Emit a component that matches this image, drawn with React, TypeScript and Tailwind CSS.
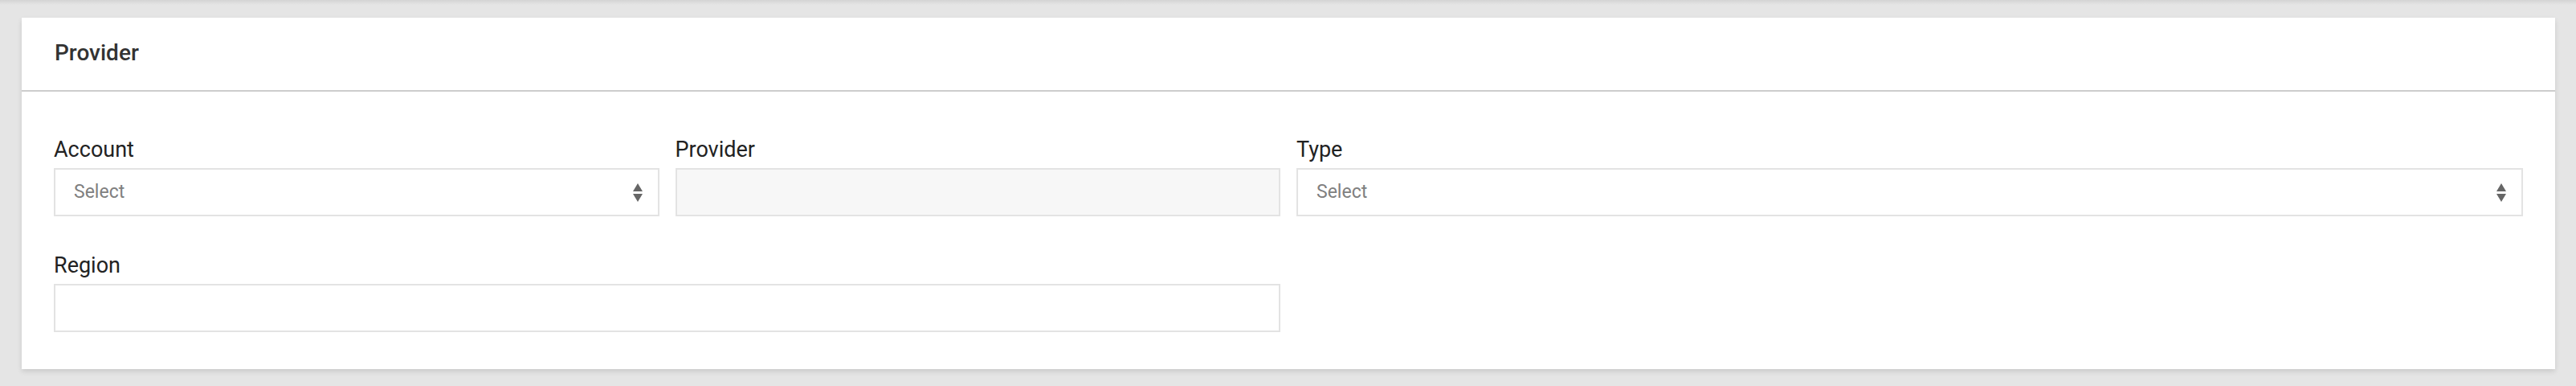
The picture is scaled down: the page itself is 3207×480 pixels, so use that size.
import React from 'react';

const SelectArrows: React.FC = () => (
  <svg width="12" height="23" viewBox="0 0 12 23" className="shrink-0">
    <polygon points="6,0 12,10 0,10" fill="#666666" />
    <polygon points="0,13 12,13 6,23" fill="#666666" />
  </svg>
);

const Field: React.FC<{ label: string; className?: string; children: React.ReactNode }> = ({
  label,
  className = '',
  children,
}) => (
  <div className={className}>
    <label className="block text-[27px] leading-[36px] text-[#222222] mb-[5px]">{label}</label>
    {children}
  </div>
);

const SelectBox: React.FC<{ placeholder: string }> = ({ placeholder }) => (
  <div className="h-[60px] border-2 border-[#e3e3e3] bg-white flex items-center justify-between pl-[23px] pr-[19px]">
    <span className="text-[23px] text-[#808080]">{placeholder}</span>
    <SelectArrows />
  </div>
);

const App: React.FC = () => {
  return (
    <div className="min-h-[480px] bg-[#e5e5e5] font-['Roboto',sans-serif]">
      {/* shadow from the card above */}
      <div className="h-[6px] bg-gradient-to-b from-[#d4d4d4] to-[#e5e5e5]" />

      <div className="ml-[27px] mr-[26px] mt-[16px] bg-white shadow-[0_3px_6px_rgba(0,0,0,0.12)]">
        {/* Header */}
        <div className="h-[92px] border-b-2 border-[#cdcdcd] flex items-center pl-[41px] pb-[2px]">
          <h2 className="text-[28px] font-medium text-[#333333] leading-none">Provider</h2>
        </div>

        {/* Body */}
        <div className="px-[40px] pt-[54px] pb-[46px] grid grid-cols-4 gap-x-[20px] gap-y-[43px]">
          <Field label="Account">
            <SelectBox placeholder="Select" />
          </Field>
          <Field label="Provider">
            <div className="h-[60px] border-2 border-[#e3e3e3] bg-[#f7f7f7]" />
          </Field>
          <Field label="Type" className="col-span-2">
            <SelectBox placeholder="Select" />
          </Field>
          <Field label="Region" className="col-span-2">
            <div className="h-[60px] border-2 border-[#e3e3e3] bg-white" />
          </Field>
        </div>
      </div>
    </div>
  );
};

export default App;
